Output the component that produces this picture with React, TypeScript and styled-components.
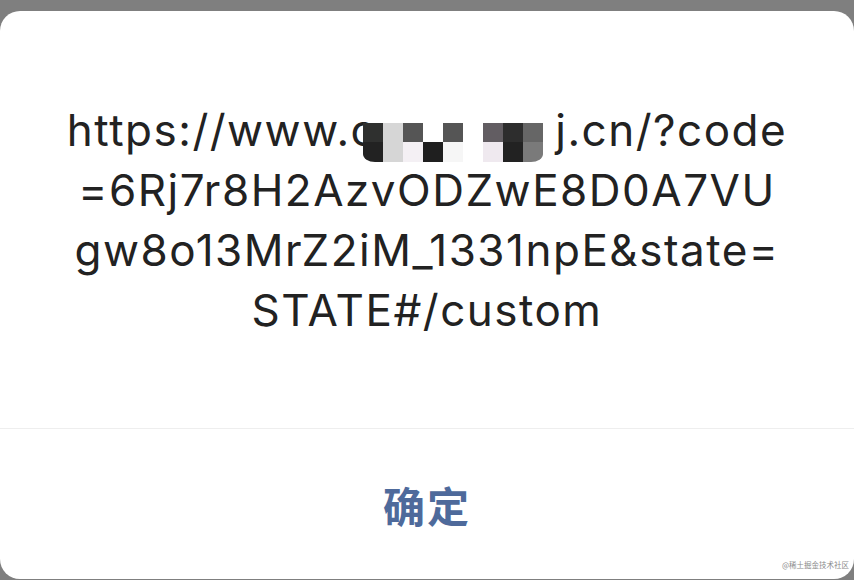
import styled, { createGlobalStyle } from "styled-components";

const GlobalStyle = createGlobalStyle`
  html, body {
    margin: 0;
    padding: 0;
    background: #7f7f7f;
  }
  #root {
    height: 580px;
  }
`;

const Screen = styled.div`
  height: 580px;
  padding-top: 11px;
  box-sizing: border-box;
  overflow: hidden;
`;

const Dialog = styled.div`
  position: relative;
  height: 568px;
  background: #ffffff;
  border-radius: 20px;
  display: flex;
  flex-direction: column;
`;

const Message = styled.div`
  height: 417px;
  display: flex;
  flex-direction: column;
  align-items: center;
  justify-content: center;
  font-family: Inter, "Noto Sans", sans-serif;
  font-size: 44px;
  color: #222222;
`;

const Line = styled.div`
  height: 60px;
  line-height: 60px;
  white-space: nowrap;
  letter-spacing: 1.5px;
`;

const Mosaic = styled.span`
  display: inline-block;
  overflow: hidden;
  vertical-align: -16px;
  margin: 0 12px 0 -14px;
  border-radius: 0 0 12px 12px / 0 0 8px 8px;
`;

const MosaicGrid = styled.span`
  display: grid;
  grid-template-columns: repeat(9, 20px);
  grid-template-rows: 19px 20px;
`;

const Cell = styled.span<{ $c: string }>`
  background: ${(p) => p.$c};
`;

const Divider = styled.div`
  height: 1px;
  background: #eeeeee;
`;

const Footer = styled.div`
  flex: 1;
  display: flex;
  align-items: center;
  justify-content: center;
`;

const ConfirmButton = styled.button`
  border: none;
  background: none;
  padding: 0;
  font-family: "Noto Sans CJK SC", sans-serif;
  font-size: 42px;
  font-weight: 700;
  color: #4e6a9b;
  letter-spacing: 2px;
`;

const Watermark = styled.div`
  position: absolute;
  right: 5px;
  bottom: 9px;
  font-family: "Noto Sans CJK SC", sans-serif;
  font-size: 7.5px;
  color: #8a8a8a;
`;

const cells = [
  "#2f302f", "#d6d6d6", "#555555", "#ffffff", "#555555", "#ffffff", "#625d62", "#2d2d2d", "#666666",
  "#222222", "#d6d6d6", "#f4f0f4", "#1f1f1f", "#f6f6f6", "#ffffff", "#efe9ef", "#222222", "#7a7a7a",
];

export default function App() {
  return (
    <>
      <GlobalStyle />
      <Screen>
        <Dialog>
          <Message>
            <Line>
              https://www.c
              <Mosaic>
                <MosaicGrid>
                  {cells.map((c, i) => (
                    <Cell key={i} $c={c} />
                  ))}
                </MosaicGrid>
              </Mosaic>
              j.cn/?code
            </Line>
            <Line>=6Rj7r8H2AzvODZwE8D0A7VU</Line>
            <Line>gw8o13MrZ2iM_1331npE&amp;state=</Line>
            <Line>STATE#/custom</Line>
          </Message>
          <Divider />
          <Footer>
            <ConfirmButton>确定</ConfirmButton>
          </Footer>
          <Watermark>@稀土掘金技术社区</Watermark>
        </Dialog>
      </Screen>
    </>
  );
}
